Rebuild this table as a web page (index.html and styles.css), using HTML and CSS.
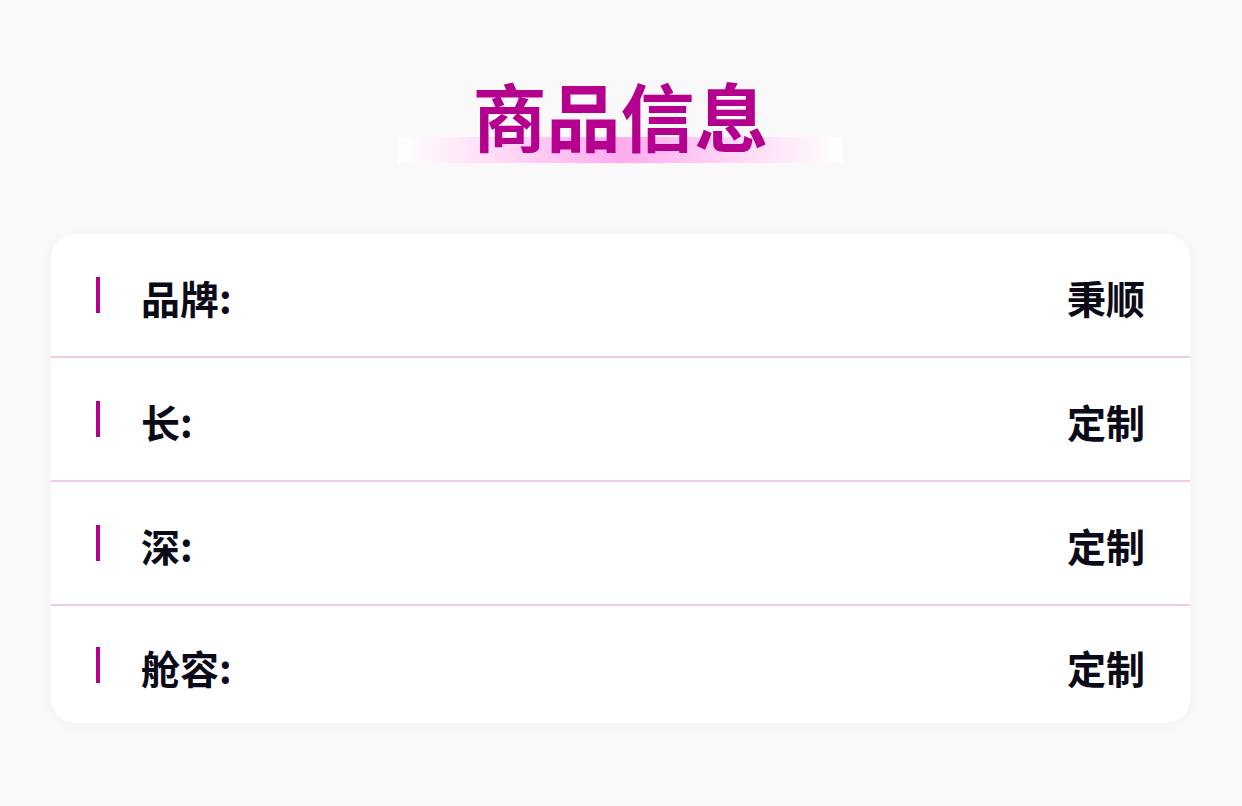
FILE: index.html
```html
<!DOCTYPE html>
<html lang="zh">
<head>
<meta charset="utf-8">
<title>商品信息</title>
<link rel="stylesheet" href="styles.css">
</head>
<body>
<div class="page">
  <header class="heading">
    <div class="heading-mark"></div>
    <h1 class="heading-text">商品信息</h1>
  </header>
  <section class="card">
    <div class="row">
      <div class="label"><span class="bar"></span><span class="label-text">品牌:</span></div>
      <div class="value">秉顺</div>
    </div>
    <div class="row">
      <div class="label"><span class="bar"></span><span class="label-text">长:</span></div>
      <div class="value">定制</div>
    </div>
    <div class="row">
      <div class="label"><span class="bar"></span><span class="label-text">深:</span></div>
      <div class="value">定制</div>
    </div>
    <div class="row row-last">
      <div class="label"><span class="bar"></span><span class="label-text">舱容:</span></div>
      <div class="value">定制</div>
    </div>
  </section>
</div>
</body>
</html>
```
FILE: styles.css
```css
* { box-sizing: border-box; }
html, body {
  margin: 0;
  padding: 0;
  background: #f9f9f9;
  font-family: "Noto Sans CJK SC", "Noto Sans", sans-serif;
}
.page {
  width: 1242px;
  height: 806px;
  padding: 70px 52px 0 51px;
  display: flex;
  flex-direction: column;
  align-items: center;
}
.heading {
  position: relative;
  width: 445px;
  height: 94px;
  display: flex;
  justify-content: center;
}
.heading-mark {
  position: absolute;
  left: 0;
  right: 0;
  top: 67px;
  height: 26px;
  background: linear-gradient(90deg, #ffffff 0%, #ffd6f6 25%, #ffabee 50%, #ffd6f6 75%, #ffffff 100%);
}
.heading-text {
  position: relative;
  margin: 0;
  font-size: 74px;
  line-height: 88px;
  font-weight: 700;
  color: #b5008f;
  letter-spacing: 0;
}
.card {
  margin-top: 70px;
  width: 1139px;
  background: #ffffff;
  border-radius: 24px;
  box-shadow: 0 2px 14px rgba(0, 0, 0, 0.035);
  overflow: hidden;
}
.row {
  height: 124px;
  padding: 0 45px;
  display: flex;
  align-items: center;
  justify-content: space-between;
  border-bottom: 2px solid #f0cbe9;
}
.row-last {
  height: 117px;
  border-bottom: none;
}
.label {
  display: flex;
  align-items: center;
}
.bar {
  width: 4px;
  height: 36px;
  background: #b5008f;
  margin-right: 42px;
}
.label-text, .value {
  font-size: 39px;
  font-weight: 700;
  color: #0a0a18;
  line-height: 44px;
  padding-top: 4px;
}
.label-text {
  margin-left: -1px;
}
```
